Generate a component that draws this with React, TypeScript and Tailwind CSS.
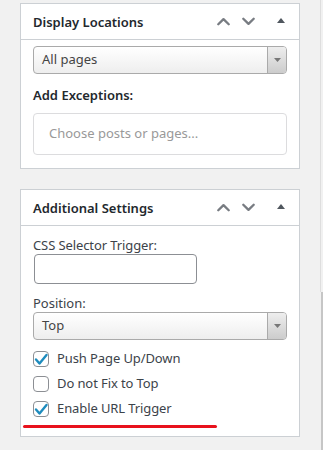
import React from "react";

const Chevron = ({ up }: { up?: boolean }) => (
  <svg width="13" height="9" viewBox="0 0 13 9" fill="none" className="text-[#787c82]">
    <path
      d={up ? "M1.3 7.3 6.5 2.1l5.2 5.2" : "M1.3 1.7 6.5 6.9l5.2-5.2"}
      stroke="currentColor"
      strokeWidth="2.3"
      strokeLinecap="round"
      strokeLinejoin="round"
    />
  </svg>
);

const Caret = () => (
  <svg width="8" height="5" viewBox="0 0 8 5" className="text-[#50575e]">
    <path d="M0 5 4 0l4 5z" fill="currentColor" />
  </svg>
);

const PostBox = ({
  title,
  children,
  className,
}: {
  title: string;
  children: React.ReactNode;
  className?: string;
}) => (
  <div className="mb-5 w-[280px] border border-[#ccd0d4] bg-white">
    <div className="flex h-9 items-center border-b border-[#ccd0d4] pl-3 pr-[14px]">
      <h2 className="pt-[2px] text-[13px] font-semibold text-[#23282d]">{title}</h2>
      <div className="ml-auto flex items-center">
        <Chevron up />
        <span className="ml-3">
          <Chevron />
        </span>
        <span className="mb-[2px] ml-[22px]">
          <Caret />
        </span>
      </div>
    </div>
    <div className={className}>{children}</div>
  </div>
);

const Select = ({ value }: { value: string }) => (
  <div className="flex h-[28px] w-full items-stretch overflow-hidden rounded-[4px] border border-[#aaa] bg-linear-to-b from-white to-[#eeeeee]">
    <span className="flex flex-1 items-center pl-2 text-[13px] text-[#444]">{value}</span>
    <span className="flex w-[19px] items-center justify-center border-l border-[#aaa] bg-linear-to-b from-[#eeeeee] to-[#cccccc]">
      <svg width="7" height="4" viewBox="0 0 7 4">
        <path d="M0 0h7L3.5 4z" fill="#777" />
      </svg>
    </span>
  </div>
);

const Check = ({ checked, label }: { checked?: boolean; label: string }) => (
  <label className="flex h-4 items-center">
    <span className="relative flex h-4 w-4 shrink-0 rounded-[4px] border border-[#8c8f94] bg-white">
      {checked && (
        <svg width="16" height="16" viewBox="0 0 16 16" className="absolute -left-px -top-px">
          <path
            d="M3 8.5 6.5 12.5 13.5 4"
            fill="none"
            stroke="#1e8cbe"
            strokeWidth="2.4"
            strokeLinecap="round"
            strokeLinejoin="round"
          />
        </svg>
      )}
    </span>
    <span className="ml-2 text-[13px] tracking-[-0.1px] text-[#3c434a]">{label}</span>
  </label>
);

export default function App() {
  return (
    <div className="relative flex h-[450px] w-[323px] overflow-hidden bg-[#f1f1f1] font-['Segoe_UI','Noto_Sans',sans-serif]">
      <div className="flex-1 pl-5 pt-[3px]">
        <PostBox title="Display Locations" className="px-3 pb-[13px] pt-[6px]">
          <Select value="All pages" />
          <p className="mt-[11px] h-5 text-[13px] font-semibold leading-5 text-[#23282d]">
            Add Exceptions:
          </p>
          <div className="mt-2 flex h-[42px] items-center rounded-[4px] border border-[#dcdcde] pl-[15px] text-[13px] text-[#999]">
            Choose posts or pages...
          </div>
        </PostBox>

        <PostBox title="Additional Settings" className="px-3 pb-[19px] pt-[10px]">
          <p className="h-[18px] text-[13px] leading-[18px] tracking-[-0.1px] text-[#3c434a]">
            CSS Selector Trigger:
          </p>
          <div className="ml-px h-[30px] w-[163px] rounded-[4px] border border-[#8c8f94] bg-white" />
          <p className="mt-[10px] h-[18px] text-[13px] leading-[18px] text-[#3c434a]">Position:</p>
          <Select value="Top" />
          <div className="mt-[11px] flex flex-col gap-[9px]">
            <Check checked label="Push Page Up/Down" />
            <Check label="Do not Fix to Top" />
            <Check checked label="Enable URL Trigger" />
          </div>
        </PostBox>
      </div>

      <div className="flex w-[3px] flex-col">
        <div className="h-[292px] w-px bg-[#dedede]" />
        <div className="ml-px w-[2px] flex-1 bg-[#c6c6c6]" />
      </div>

      <div className="absolute left-[23px] top-[425px] h-[3px] w-[194px] rounded-full bg-[#e8121c]" />
    </div>
  );
}
